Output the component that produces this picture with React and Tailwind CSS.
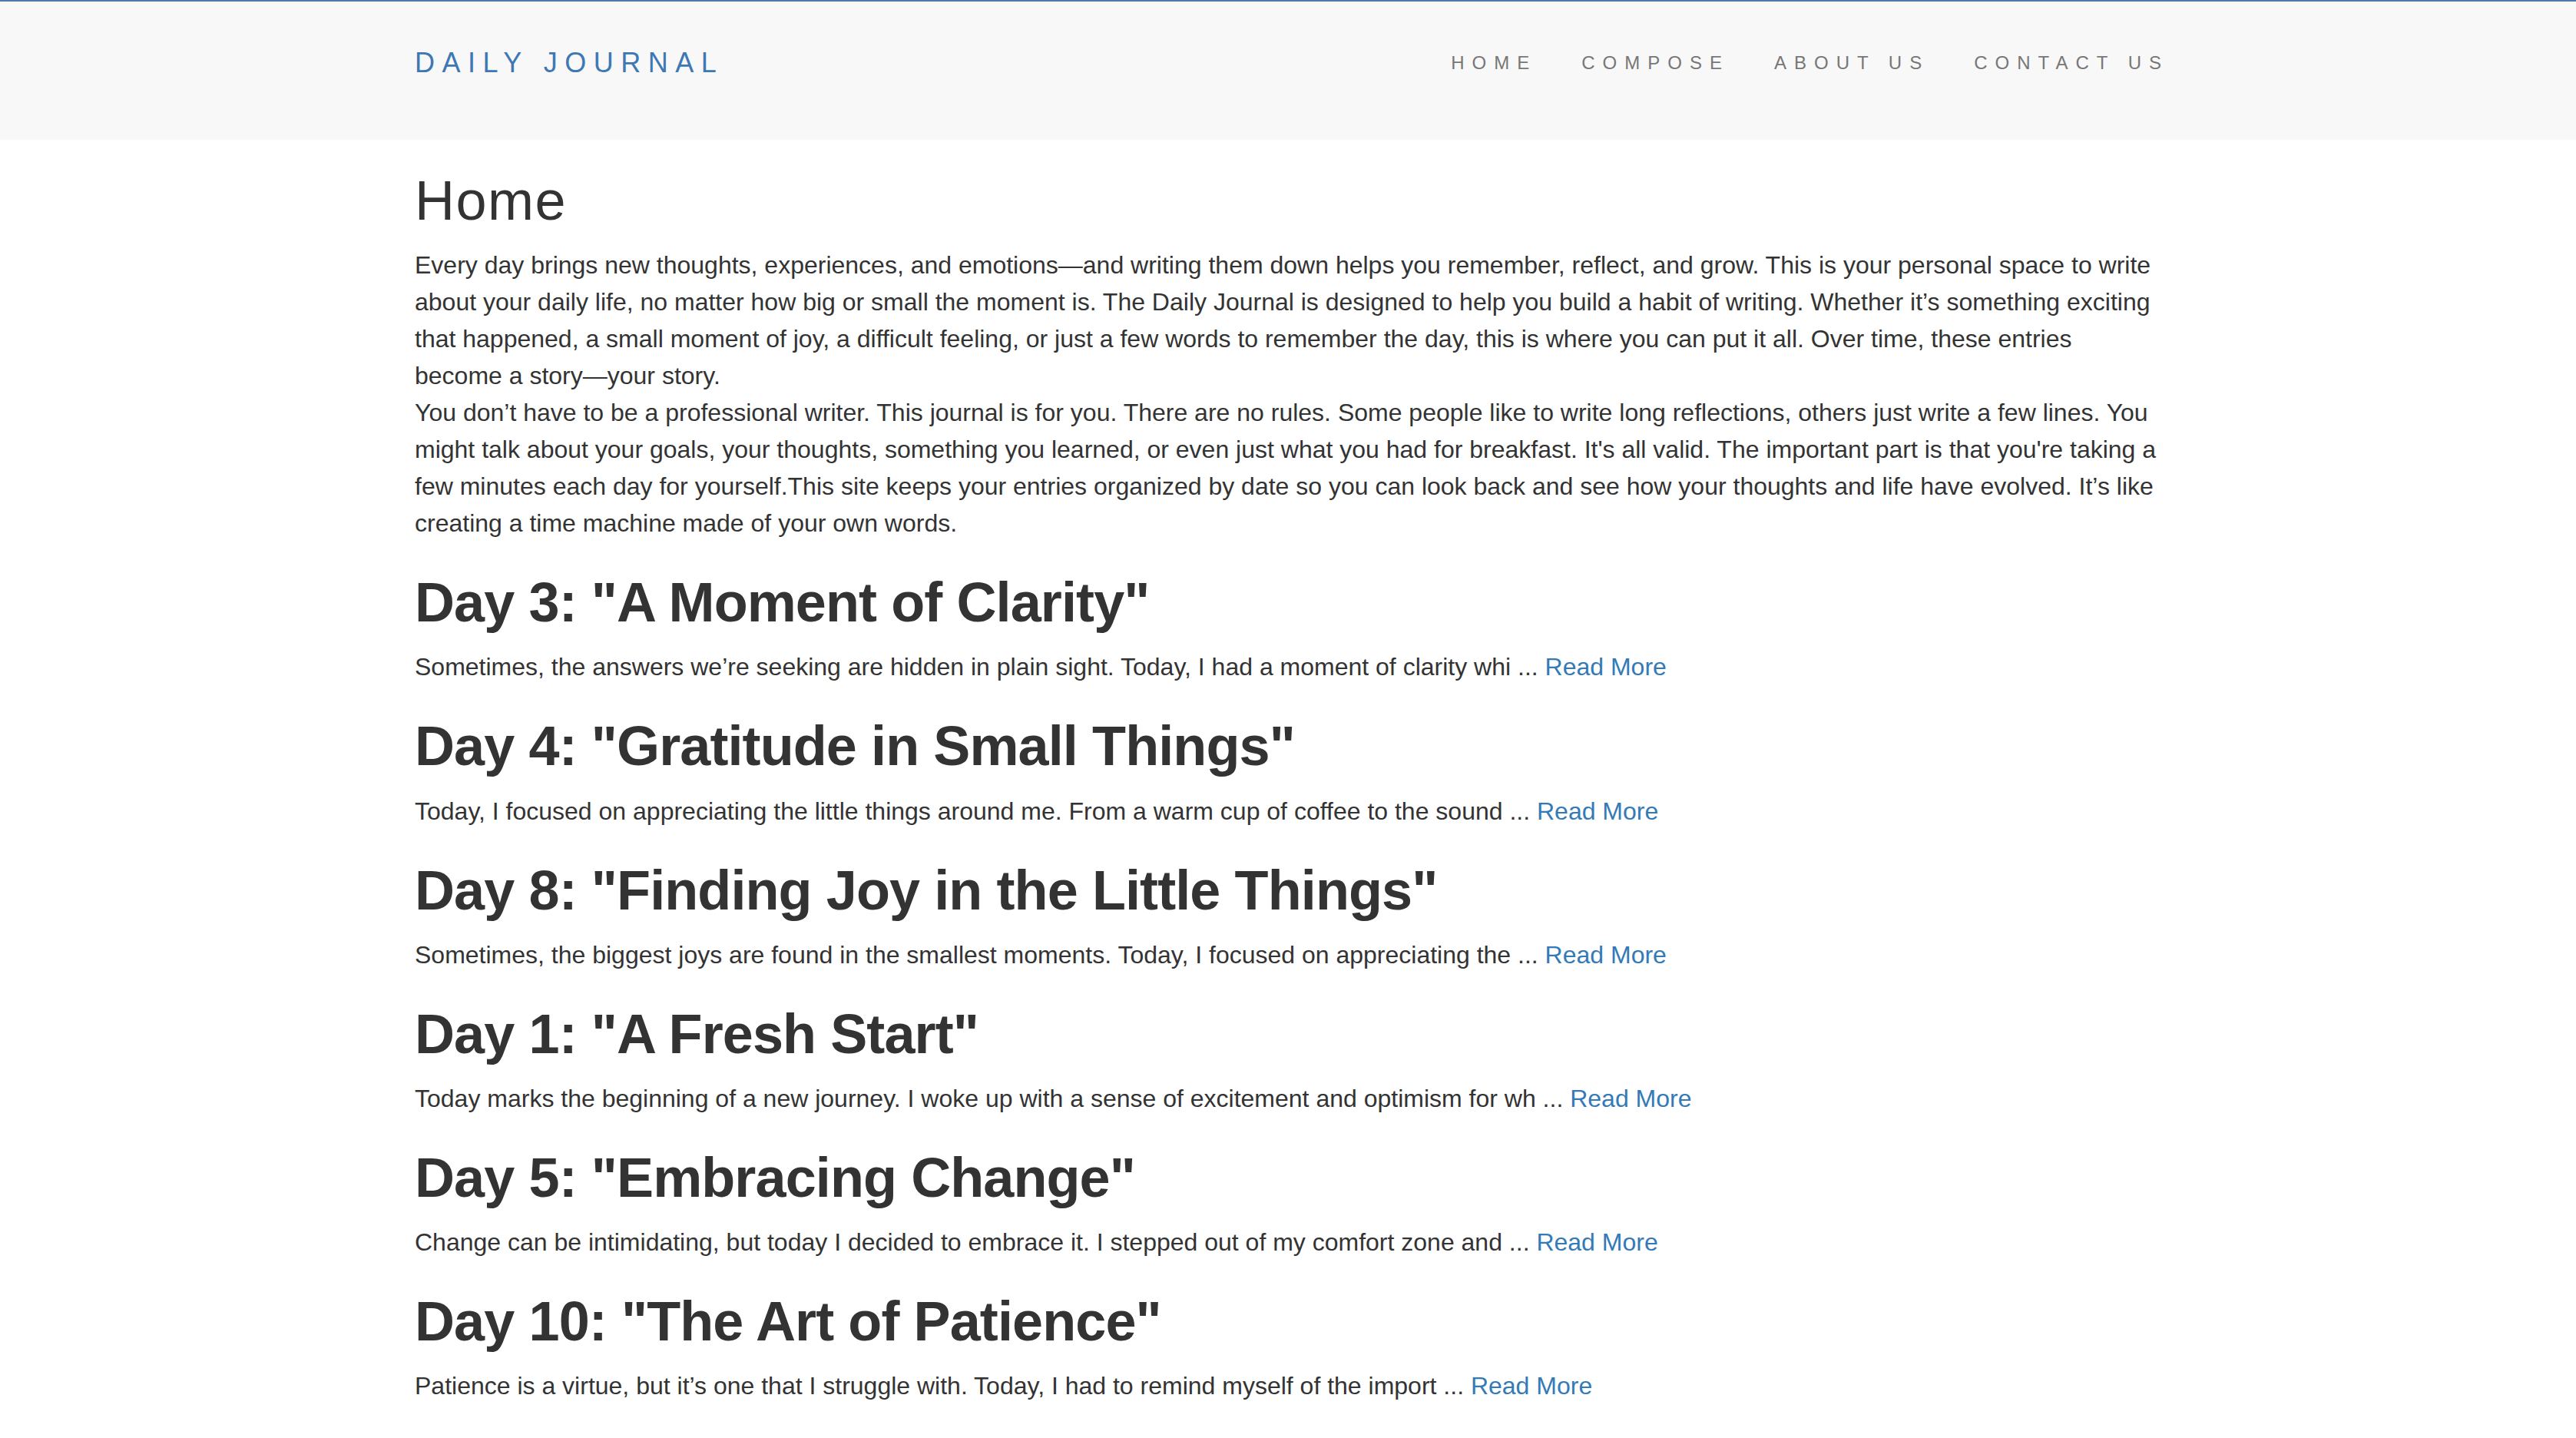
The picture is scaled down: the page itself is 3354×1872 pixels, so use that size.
const posts = [
  {
    id: 3,
    title: 'Day 3: "A Moment of Clarity"',
    body: "Sometimes, the answers we\u2019re seeking are hidden in plain sight. Today, I had a moment of clarity whi",
  },
  {
    id: 4,
    title: 'Day 4: "Gratitude in Small Things"',
    body: "Today, I focused on appreciating the little things around me. From a warm cup of coffee to the sound",
  },
  {
    id: 8,
    title: 'Day 8: "Finding Joy in the Little Things"',
    body: "Sometimes, the biggest joys are found in the smallest moments. Today, I focused on appreciating the",
  },
  {
    id: 1,
    title: 'Day 1: "A Fresh Start"',
    body: "Today marks the beginning of a new journey. I woke up with a sense of excitement and optimism for wh",
  },
  {
    id: 5,
    title: 'Day 5: "Embracing Change"',
    body: "Change can be intimidating, but today I decided to embrace it. I stepped out of my comfort zone and",
  },
  {
    id: 10,
    title: 'Day 10: "The Art of Patience"',
    body: "Patience is a virtue, but it\u2019s one that I struggle with. Today, I had to remind myself of the import",
  },
];

const navLinks = ["HOME", "COMPOSE", "ABOUT US", "CONTACT US"];

export default function App() {
  return (
    <div className="min-h-screen bg-white font-['Liberation_Sans',Arial,sans-serif] text-[#333]">
      {/* Navbar */}
      <nav className="h-[182px] border-t-2 border-[#4f79a8] bg-[#f8f8f8] pt-[30px]">
        <div className="mx-auto flex h-[100px] w-[2280px] items-center justify-between pl-[3px]">
          <a href="#" className="text-[36px] leading-[40px] tracking-[9.5px] text-[#3d78b5]">
            DAILY JOURNAL
          </a>
          <ul className="-mr-[7px] flex items-center gap-[58px]">
            {navLinks.map((link) => (
              <li key={link}>
                <a href="#" className="text-[24px] leading-[40px] tracking-[10px] text-[#777]">
                  {link}
                </a>
              </li>
            ))}
          </ul>
        </div>
      </nav>

      {/* Content */}
      <main className="mx-auto w-[2280px] pl-[3px] pt-[40px] pb-[40px]">
        <h1 className="mb-[20px] text-[72px] leading-[79.2px] font-normal tracking-[1.5px]">Home</h1>
        <p className="text-[32px] leading-[48px]">
          Every day brings new thoughts, experiences, and emotions—and writing them down helps you
          remember, reflect, and grow. This is your personal space to write about your daily life, no
          matter how big or small the moment is. The Daily Journal is designed to help you build a habit
          of writing. Whether it’s something exciting that happened, a small moment of joy, a difficult
          feeling, or just a few words to remember the day, this is where you can put it all. Over time,
          these entries become a story—your story.
        </p>
        <p className="mb-[40px] text-[32px] leading-[48px]">
          You don’t have to be a professional writer. This journal is for you. There are no rules. Some
          people like to write long reflections, others just write a few lines. You might talk about your
          goals, your thoughts, something you learned, or even just what you had for breakfast. It's all
          valid. The important part is that you're taking a few minutes each day for yourself.This site
          keeps your entries organized by date so you can look back and see how your thoughts and life
          have evolved. It’s like creating a time machine made of your own words.
        </p>

        {posts.map((post) => (
          <div key={post.id} className="mb-[40px]">
            <h1 className="mb-[20px] text-[72px] leading-[79.2px] font-bold tracking-[-0.9px]">
              {post.title}
            </h1>
            <p className="text-[32px] leading-[48px]">
              {post.body} ...{" "}
              <a href="#" className="text-[#337ab7]">
                Read More
              </a>
            </p>
          </div>
        ))}
      </main>
    </div>
  );
}
